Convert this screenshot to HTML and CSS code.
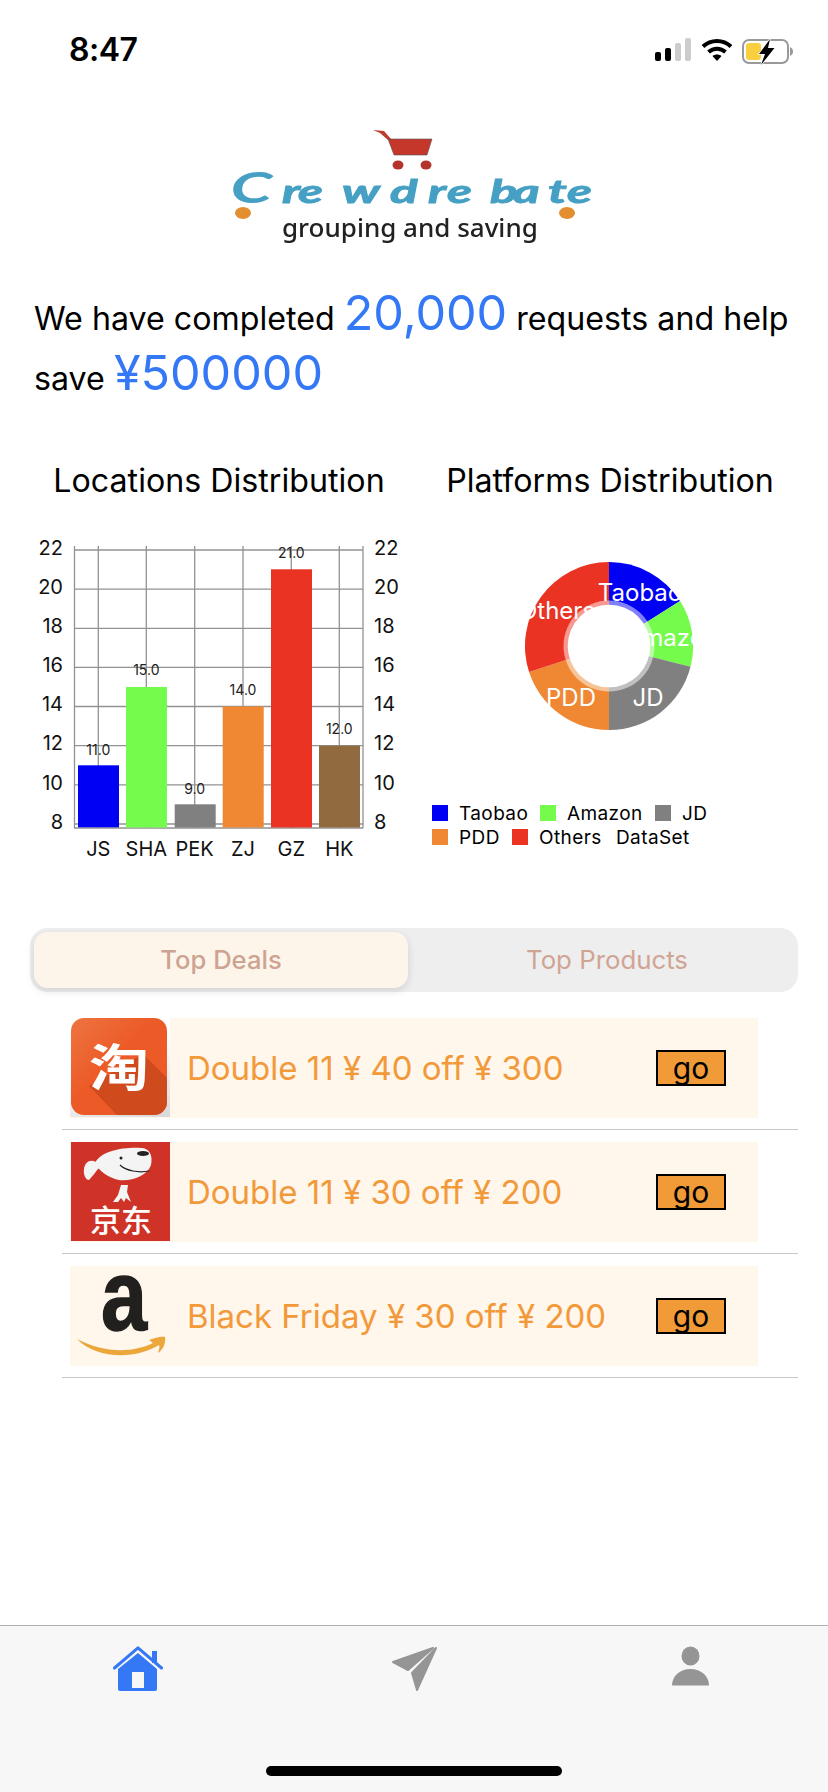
FILE: index.html
```html
<!DOCTYPE html>
<html lang="en">
<head>
<meta charset="utf-8">
<title>Crewdrebate</title>
<link rel="stylesheet" href="styles.css">
</head>
<body>
<div class="page">
  <header class="status">
    <span class="time">8:47</span>
    <div class="status-icons">
      <svg class="signal" width="38" height="24" viewBox="0 0 38 24">
        <rect class="sig-on" x="1" y="14" width="6" height="9" rx="2"/>
        <rect class="sig-on" x="11" y="10" width="6" height="13" rx="2"/>
        <rect class="sig-off" x="21" y="5" width="6" height="18" rx="2"/>
        <rect class="sig-off" x="31" y="0" width="6" height="23" rx="2"/>
      </svg>
      <svg class="wifi" width="32" height="24" viewBox="0 0 32 24">
        <path class="wifi-arc" d="M2 8.5C10 1 22 1 30 8.5"/>
        <path class="wifi-arc" d="M7.5 14C12.5 9.500 19.500 9.500 24.500 14"/>
        <path class="wifi-dot" d="M11.500 18C14 16 18 16 20.500 18L16 23Z"/>
      </svg>
      <svg class="battery" width="52" height="28" viewBox="0 0 52 28">
        <rect class="bat-shell" x="1" y="2" width="45" height="23" rx="6"/>
        <rect class="bat-fill" x="4" y="5" width="15" height="17" rx="3"/>
        <path class="bat-nub" d="M48 9C50.500 10 51 12 51 13.500C51 15 50.500 17 48 18Z"/>
        <path class="bat-bolt" d="M28 1L17 16H23L19 27L32.500 10H26Z"/>
      </svg>
    </div>
  </header>

  <div class="logo">
    <svg width="390" height="130" viewBox="219 120 390 130">
      <path class="cart-handle" d="M373 130L384 131L391 139L388 140L380 133Z"/>
      <path class="cart-basket" d="M388 139H432L427 155H394Z"/>
      <ellipse class="cart-wheel" cx="398" cy="165" rx="5.500" ry="4.500"/>
      <ellipse class="cart-wheel" cx="426" cy="165" rx="5.500" ry="4.500"/>
      <g transform="scale(1.6 1)">
        <text class="logo-cap" x="144" y="203">C</text>
        <text class="logo-word" x="176.250 186.250 213.750 243.750 267.500 279.400 306.250 320.600 342.500 354.400" y="203">rewdrebate</text>
      </g>
      <ellipse class="logo-dot" cx="243" cy="213" rx="8" ry="6"/>
      <ellipse class="logo-dot" cx="567" cy="213" rx="8" ry="6"/>
      <text class="logo-tag" x="282" y="237">grouping and saving</text>
    </svg>
  </div>

  <p class="headline">We have completed <span class="big">20,000</span> requests and help save <span class="big">¥500000</span></p>

  <section class="charts">
    <div class="chart-col">
      <h2 class="chart-title">Locations Distribution</h2>
      <svg class="chart" width="390" height="340" viewBox="24 530 390 340">
        <g class="grid">
          <line x1="74" x2="363" y1="550" y2="550"/>
          <line x1="74" x2="363" y1="589.200" y2="589.200"/>
          <line x1="74" x2="363" y1="628.300" y2="628.300"/>
          <line x1="74" x2="363" y1="667.400" y2="667.400"/>
          <line x1="74" x2="363" y1="706.500" y2="706.500"/>
          <line x1="74" x2="363" y1="745.700" y2="745.700"/>
          <line x1="74" x2="363" y1="784.800" y2="784.800"/>
          <line x1="74" x2="363" y1="824" y2="824"/>
          <line x1="74" x2="363" y1="828" y2="828"/>
          <line x1="74.500" x2="74.500" y1="546" y2="828"/>
          <line x1="98.300" x2="98.300" y1="546" y2="828"/>
          <line x1="146.300" x2="146.300" y1="546" y2="828"/>
          <line x1="194.700" x2="194.700" y1="546" y2="828"/>
          <line x1="243" x2="243" y1="546" y2="828"/>
          <line x1="291.300" x2="291.300" y1="546" y2="828"/>
          <line x1="339.300" x2="339.300" y1="546" y2="828"/>
          <line x1="363" x2="363" y1="546" y2="828"/>
        </g>
        <rect class="c-blue" x="78" y="765.300" width="41" height="62"/>
        <rect class="c-green" x="126" y="687" width="41" height="140.500"/>
        <rect class="c-gray" x="174.700" y="804.300" width="41" height="23.200"/>
        <rect class="c-orange" x="222.700" y="706.500" width="41" height="121"/>
        <rect class="c-red" x="271" y="569.300" width="41" height="258.200"/>
        <rect class="c-brown" x="319" y="745.700" width="41" height="81.800"/>
        <g class="val">
          <text x="98.300" y="755">11.0</text>
          <text x="146.300" y="675">15.0</text>
          <text x="194.700" y="794">9.0</text>
          <text x="243" y="695">14.0</text>
          <text x="291.300" y="558">21.0</text>
          <text x="339.300" y="734">12.0</text>
        </g>
        <g class="axis-l">
          <text x="63" y="555">22</text>
          <text x="63" y="594">20</text>
          <text x="63" y="633">18</text>
          <text x="63" y="672">16</text>
          <text x="63" y="711">14</text>
          <text x="63" y="750">12</text>
          <text x="63" y="790">10</text>
          <text x="63" y="829">8</text>
        </g>
        <g class="axis-r">
          <text x="374" y="555">22</text>
          <text x="374" y="594">20</text>
          <text x="374" y="633">18</text>
          <text x="374" y="672">16</text>
          <text x="374" y="711">14</text>
          <text x="374" y="750">12</text>
          <text x="374" y="790">10</text>
          <text x="374" y="829">8</text>
        </g>
        <g class="axis-x">
          <text x="98.300" y="856">JS</text>
          <text x="146.300" y="856">SHA</text>
          <text x="194.700" y="856">PEK</text>
          <text x="243" y="856">ZJ</text>
          <text x="291.300" y="856">GZ</text>
          <text x="339.300" y="856">HK</text>
        </g>
      </svg>
    </div>
    <div class="chart-col">
      <h2 class="chart-title">Platforms Distribution</h2>
      <svg class="chart" width="392" height="270" viewBox="414 530 392 270">
        <path class="c-blue" d="M609 562A84 84 0 0 1 680 601L609 646Z"/>
        <path class="c-green" d="M680.100 601A84 84 0 0 1 690.500 666.800L609 646Z"/>
        <path class="c-gray" d="M690.500 666.800A84 84 0 0 1 609 730L609 646Z"/>
        <path class="c-orange" d="M609 730A84 84 0 0 1 529.100 672L609 646Z"/>
        <path class="c-red" d="M529.100 672A84 84 0 0 1 609 562L609 646Z"/>
        <g class="pie-label">
          <text x="640" y="601">Taobao</text>
          <text x="672" y="646">Amazon</text>
          <text x="648" y="706">JD</text>
          <text x="571" y="706">PDD</text>
          <text x="557" y="619">Others</text>
        </g>
        <circle class="pie-ring" cx="609" cy="646" r="45.500"/>
        <circle class="pie-hole" cx="609" cy="646" r="41.300"/>
      </svg>
      <div class="legend">
        <div class="legend-row">
          <span class="swatch s-blue"></span><span class="legend-text t-taobao">Taobao</span>
          <span class="swatch s-green"></span><span class="legend-text t-amazon">Amazon</span>
          <span class="swatch s-gray"></span><span class="legend-text">JD</span>
        </div>
        <div class="legend-row">
          <span class="swatch s-orange"></span><span class="legend-text t-pdd">PDD</span>
          <span class="swatch s-red"></span><span class="legend-text t-others">Others</span>
          <span class="legend-text t-dataset">DataSet</span>
        </div>
      </div>
    </div>
  </section>

  <div class="segment">
    <div class="seg-on">Top Deals</div>
    <div class="seg-off">Top Products</div>
  </div>

  <ul class="deals">
    <li class="deal">
      <div class="deal-inner">
        <div class="icon icon-taobao">
          <svg width="96" height="97" viewBox="0 0 96 97">
            <defs>
              <linearGradient id="tbg" x1="0" y1="0" x2="1" y2="1">
                <stop offset="0" stop-color="#ee7440"/>
                <stop offset=".45" stop-color="#ec5a27"/>
              </linearGradient>
              <clipPath id="tbc"><rect width="96" height="97" rx="13"/></clipPath>
            </defs>
            <g clip-path="url(#tbc)">
              <rect width="96" height="97" fill="url(#tbg)"/>
              <path class="tb-shade" d="M72 36L96 60V97H46L18 68Z"/>
            </g>
            <text class="tb-char" x="18" y="68" textLength="60" lengthAdjust="spacingAndGlyphs">淘</text>
          </svg>
        </div>
        <span class="deal-text">Double 11 ¥ 40 off ¥ 300</span>
        <span class="go">go</span>
      </div>
    </li>
    <li class="deal">
      <div class="deal-inner">
        <div class="icon">
          <svg width="99" height="99" viewBox="0 0 99 99">
            <rect class="jd-bg" width="99" height="99"/>
            <path class="jd-white" d="M24 21C30 9 52 5 70 6C79 6 82 14 80 23C76 35 56 41 44 37C36 34 29 30 24 21Z"/>
            <path class="jd-white" d="M25 20C19 17 14 20 13 27C12 33 15 38 18 38C22 34 25 29 28 26Z"/>
            <ellipse class="jd-dark" cx="72" cy="11.500" rx="6" ry="2.500"/>
            <circle class="jd-dark" cx="50" cy="16" r="1.500"/>
            <path class="jd-smile" d="M49 23C55 29 68 31 78 29"/>
            <path class="jd-white" d="M50 43L57 43L56 50L60 60L55 56L53 60L50 56L47 60L42 60L47 53Z"/>
            <text class="jd-name" x="50" y="90">京东</text>
          </svg>
        </div>
        <span class="deal-text">Double 11 ¥ 30 off ¥ 200</span>
        <span class="go">go</span>
      </div>
    </li>
    <li class="deal">
      <div class="deal-inner">
        <div class="icon">
          <svg width="99" height="99" viewBox="0 0 99 99">
            <text class="amz-a" x="30" y="64" textLength="46" lengthAdjust="spacingAndGlyphs">a</text>
            <path class="amz-smile" d="M6 73C30 86 60 88 82 77L78 74C84 72 90 70 94 71C95 77 92 84 87 87C88 83 89 81 88 79C66 93 26 94 6 73Z"/>
          </svg>
        </div>
        <span class="deal-text">Black Friday ¥ 30 off ¥ 200</span>
        <span class="go">go</span>
      </div>
    </li>
  </ul>

  <nav class="tabbar">
    <div class="tabs">
      <div class="tab">
        <svg width="50" height="46" viewBox="0 0 50 46">
          <path class="home-chim" d="M39 5H44V17H39Z"/>
          <path class="home-roof" d="M1.500 22L25 1.800L48.500 22"/>
          <path class="home-body" d="M25 7L44 23V43Q44 45 42 45H7Q5 45 5 43V23Z"/>
          <rect class="home-door" x="19" y="26" width="12" height="16"/>
        </svg>
      </div>
      <div class="tab">
        <svg width="46" height="46" viewBox="0 0 46 46">
          <path class="tab-gray tab-round" d="M42 2L2 16L17 24Z"/>
          <path class="tab-gray tab-round" d="M45 2L26 44L21 27Z"/>
        </svg>
      </div>
      <div class="tab">
        <svg width="37" height="40" viewBox="0 0 37 40">
          <ellipse class="tab-gray" cx="18.500" cy="10" rx="9" ry="9.500"/>
          <path class="tab-gray" d="M0 39.500C0 30 8 23 18.500 23C29 23 37 30 37 39.500Z"/>
        </svg>
      </div>
    </div>
    <div class="home-bar"></div>
  </nav>
</div>
</body>
</html>
```

FILE: styles.css
```css
* { box-sizing: border-box; }
html, body { margin: 0; padding: 0; background: #fff; }
body { font-family: Inter, "Noto Sans CJK SC", sans-serif; color: #000; }
svg { display: block; }

.page { width: 828px; height: 1792px; display: flex; flex-direction: column; overflow: hidden; }

/* status bar */
.status { height: 88px; display: flex; justify-content: space-between; align-items: flex-start; padding: 36px 34px 0 69px; flex: none; }
.time { font-size: 32px; font-weight: 600; line-height: 28px; letter-spacing: -0.5px; }
.status-icons { display: flex; align-items: flex-start; padding-top: 2px; }
.signal { margin-right: 9px; }
.wifi { margin-right: 9px; }
.sig-on { fill: #000; }
.sig-off { fill: #ccc; }
.wifi-arc { fill: none; stroke: #000; stroke-width: 4; }
.wifi-dot { fill: #000; }
.bat-shell { fill: none; stroke: #999; stroke-width: 2; }
.bat-fill { fill: #f9cf3f; }
.bat-nub { fill: #999; }
.bat-bolt { fill: #000; stroke: #fff; stroke-width: 1.5; paint-order: stroke; }

/* logo */
.logo { flex: none; height: 162px; padding-top: 32px; display: flex; justify-content: center; }
.logo svg { filter: blur(0.5px); }
.cart-handle { fill: #c23a2c; }
.cart-basket { fill: #c6372b; stroke: #555; stroke-width: 0.6; }
.cart-wheel { fill: #b5332c; }
.logo-word { font-family: Lato, sans-serif; font-style: italic; font-weight: 700; font-size: 32px; fill: #45a0c4; stroke: #45a0c4; stroke-width: 0.9; }
.logo-cap { font-family: Lato, sans-serif; font-style: italic; font-weight: 700; font-size: 42px; fill: #45a0c4; }
.logo-dot { fill: #e38f30; }
.logo-tag { font-family: "Noto Sans", sans-serif; font-size: 26px; font-weight: 500; fill: #222; }

/* headline */
.headline { flex: none; margin: 39px 0 0; padding: 0 34px; font-size: 32.200px; line-height: 60px; height: 120px; }
.big { font-size: 48.500px; line-height: 40px; color: #3478f6; }

/* charts */
.charts { flex: none; display: flex; padding: 47px 22px 0 24px; }
.chart-col { flex: 1 1 0; }
.chart-title { margin: 0 0 24px; font-size: 32.200px; font-weight: 400; line-height: 50px; text-align: center; }

.grid line { stroke: #929292; stroke-width: 1.3; }
.c-blue { fill: #0000f5; }
.c-green { fill: #75fb4c; }
.c-gray { fill: #808080; }
.c-orange { fill: #ef8733; }
.c-red { fill: #ea3323; }
.c-brown { fill: #916b3f; }

.val text { font-size: 14px; text-anchor: middle; fill: #222; }
.axis-l text { font-size: 20px; text-anchor: end; fill: #111; }
.axis-r text { font-size: 20px; fill: #111; }
.axis-x text { font-size: 20px; text-anchor: middle; fill: #111; }

.pie-label text { font-size: 24px; text-anchor: middle; fill: #fff; }
.pie-ring { fill: rgba(255, 255, 255, 0.5); }
.pie-hole { fill: #fff; }

.legend { padding: 1px 0 0 18px; font-size: 19px; height: 70px; }
.legend-row { display: flex; align-items: center; height: 24px; }
.swatch { width: 16px; height: 16px; flex: none; }
.s-blue { background: #0000f5; }
.s-green { background: #75fb4c; }
.s-gray { background: #808080; }
.s-orange { background: #ef8733; }
.s-red { background: #ea3323; }
.legend-text { margin-left: 11px; letter-spacing: 0.4px; }
.t-taobao { width: 81px; }
.t-amazon { width: 88px; }
.t-pdd { width: 53px; }
.t-others { width: 77px; }
.t-dataset { margin-left: 0; }

/* segmented control */
.segment { flex: none; margin: 58px 30px 0; height: 64px; padding: 4px; display: flex; border-radius: 18px; background: #eee; }
.seg-on { width: 374px; border-radius: 14px; background: #fdf5ea; box-shadow: 0 3px 8px rgba(0, 0, 0, 0.12); color: #cda392; font-size: 25.600px; font-weight: 500; line-height: 56px; text-align: center; }
.seg-off { flex: 1; padding-left: 12px; color: #d0a494; font-size: 25.800px; line-height: 56px; text-align: center; }

/* deals */
.deals { flex: none; list-style: none; margin: 14px 30px 0 62px; padding: 0; }
.deal { height: 124px; padding-top: 12px; border-bottom: 1px solid #c8c8c8; }
.deal-inner { height: 100px; width: 688px; margin-left: 8px; display: flex; align-items: center; background: #fff6ec; padding-right: 32px; }
.icon { width: 100px; height: 99px; padding-left: 1px; flex: none; align-self: flex-start; }
.icon-taobao { background: linear-gradient(160deg, #fff 40%, #d8d8d8 100%); }
.tb-shade { fill: #cf4a1c; }
.tb-char { font-family: "Noto Sans CJK SC", sans-serif; font-weight: 700; font-size: 50px; fill: #fff; }
.jd-bg { fill: #cf3327; }
.jd-white { fill: #f4f4f4; }
.jd-dark { fill: #222; }
.jd-smile { fill: none; stroke: #222; stroke-width: 1.2; }
.jd-name { font-family: "Noto Sans CJK SC", sans-serif; font-size: 31px; font-weight: 500; text-anchor: middle; fill: #fff; }
.amz-a { font-family: "Liberation Sans", sans-serif; font-weight: 700; font-size: 100px; fill: #221f1f; stroke: #221f1f; stroke-width: 1.5; }
.amz-smile { fill: #eca73c; }
.deal-text { margin-left: 17px; color: #f2993a; font-size: 33px; }
.go { margin-left: auto; width: 70px; height: 36px; border: 2px solid #000; background: #f19a38; font-size: 30px; line-height: 33px; text-align: center; }

/* tab bar */
.tabbar { margin-top: auto; height: 167px; flex: none; display: flex; flex-direction: column; background: #f7f7f7; border-top: 1px solid #b0b0b0; }
.tabs { display: flex; padding-top: 20px; }
.tab { flex: 1; display: flex; justify-content: center; }
.tab-gray { fill: #959595; }
.tab-round { stroke: #959595; stroke-width: 2; stroke-linejoin: round; }
.home-chim { fill: #3478f6; }
.home-roof { fill: none; stroke: #3478f6; stroke-width: 3; stroke-linecap: round; stroke-linejoin: round; }
.home-body { fill: #3478f6; }
.home-door { fill: #f7f7f7; }
.home-bar { width: 296px; height: 10px; margin: auto auto 16px; border-radius: 5px; background: #000; }
```
